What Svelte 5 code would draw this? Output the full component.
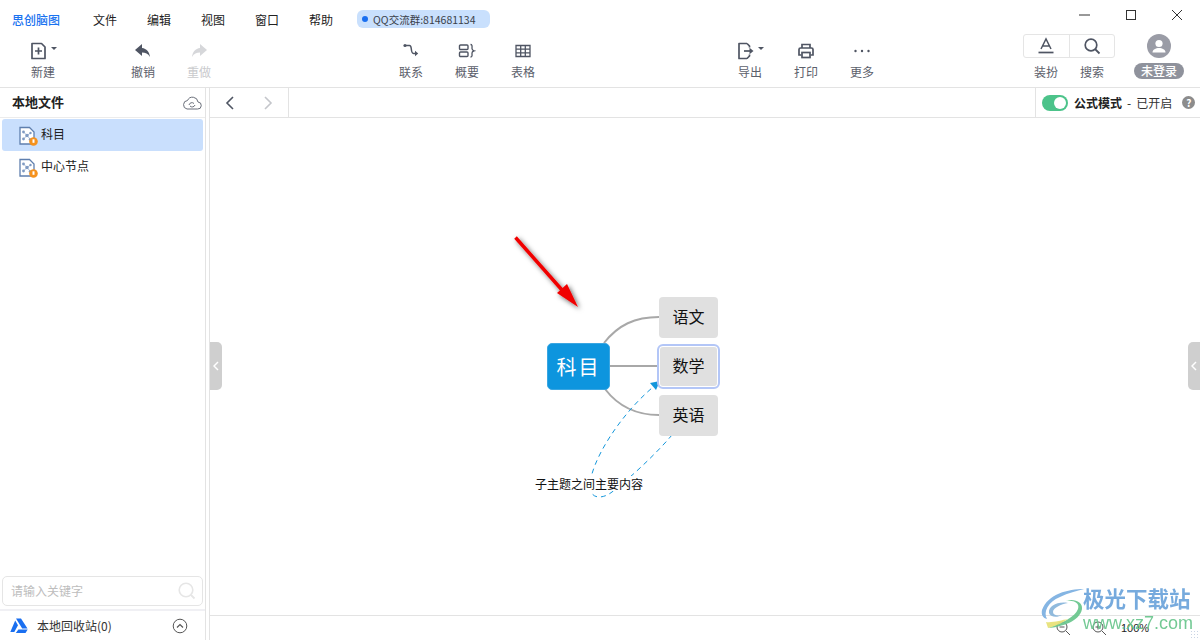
<script>
  const menus = ['文件', '编辑', '视图', '窗口', '帮助'];
  const files = [
    { name: '科目', active: true },
    { name: '中心节点', active: false }
  ];
  const branches = [
    { label: '语文', top: 179 },
    { label: '数学', top: 228, selected: true },
    { label: '英语', top: 277 }
  ];
</script>

{#snippet fileIcon()}
  <svg class="file-icon" width="20" height="20" viewBox="0 0 20 20">
    <path d="M1 1.500h9.500l4.500 4.500v12H1z" fill="#fff" stroke="#5f7fae" stroke-width="1.300" />
    <path d="M4.500 6l3.500 3.500L11.500 7M8 9.500L4.500 13M8 9.500l3.500 4" stroke="#a9bcd8" stroke-width="1" fill="none" />
    <circle cx="4.500" cy="6" r="1.400" fill="#7f9ac2" />
    <circle cx="8" cy="9.500" r="1.700" fill="#7f9ac2" />
    <circle cx="4.500" cy="13" r="1.400" fill="#7f9ac2" />
    <circle cx="11.500" cy="7" r="1.200" fill="#7f9ac2" />
    <circle cx="11" cy="13.500" r="1.300" fill="#7f9ac2" />
    <circle cx="14.500" cy="15.500" r="4.300" fill="#f5921e" />
    <path d="M14.500 13.300v3.500" stroke="#fff" stroke-width="2" />
  </svg>
{/snippet}

<div class="app">
  <header class="header">
    <div class="titlebar">
      <span class="brand">思创脑图</span>
      <nav class="menus">
        {#each menus as m}
          <span class="menu">{m}</span>
        {/each}
      </nav>
      <div class="qq"><i class="dot"></i>QQ交流群:814681134</div>
      <div class="winctl">
        <svg width="12" height="12" viewBox="0 0 12 12"><path d="M0 6h11" stroke="#333" stroke-width="1" /></svg>
        <svg width="12" height="12" viewBox="0 0 12 12"><rect x="1.500" y="1.500" width="9" height="9" fill="none" stroke="#333" /></svg>
        <svg width="12" height="12" viewBox="0 0 12 12"><path d="M1 1l10 10M11 1L1 11" stroke="#333" stroke-width="1" /></svg>
      </div>
    </div>

    <div class="toolbar">
      <div class="group first">
        <div class="tool">
          <span class="ico has-caret">
            <svg width="18" height="18" viewBox="0 0 18 18"><path d="M2 1.500h9.500l3.500 3.500v11.500H2z" fill="none" stroke="#4f5563" stroke-width="1.700" stroke-linejoin="round" /><path d="M8.500 5.500v7M5 9h7" stroke="#4f5563" stroke-width="1.700" /></svg>
            <i class="caret"></i>
          </span>
          <span>新建</span>
        </div>
      </div>
      <div class="group undo">
        <div class="tool">
          <span class="ico">
            <svg width="18" height="16" viewBox="0 0 18 16"><path d="M8 1L1 7l7 6V9.500c3.500 0 6 1 8 4.500-.5-5-3.500-8.500-8-9z" fill="#4f5563" /></svg>
          </span>
          <span>撤销</span>
        </div>
        <div class="tool off">
          <span class="ico">
            <svg width="18" height="16" viewBox="0 0 18 16"><path d="M10 1l7 6-7 6V9.500c-3.500 0-6 1-8 4.500.5-5 3.500-8.500 8-9z" fill="#d6d7da" /></svg>
          </span>
          <span>重做</span>
        </div>
      </div>
      <div class="group insert">
        <div class="tool">
          <span class="ico">
            <svg width="18" height="18" viewBox="0 0 18 18"><circle cx="3" cy="3.500" r="1.600" fill="#4f5563" /><path d="M4 3.500h3.500c1.500 0 1.500 1 1.800 3.500.3 3 .5 4.500 2.200 4.500h2.500" fill="none" stroke="#4f5563" stroke-width="1.500" /><path d="M13 8.800l3.200 2.700-3.200 2.700z" fill="#4f5563" /></svg>
          </span>
          <span>联系</span>
        </div>
        <div class="tool">
          <span class="ico">
            <svg width="18" height="18" viewBox="0 0 18 18"><rect x="1.500" y="3" width="8.500" height="4.500" rx="1" fill="none" stroke="#4f5563" stroke-width="1.400" /><rect x="1.500" y="10" width="8.500" height="4.500" rx="1" fill="none" stroke="#4f5563" stroke-width="1.400" /><path d="M12.500 2.500c2 0 1.500 2 1.500 4 0 1.500 1 2 2 2.300-1 .3-2 .8-2 2.200 0 2 .5 4-1.500 4" fill="none" stroke="#4f5563" stroke-width="1.300" /></svg>
          </span>
          <span>概要</span>
        </div>
        <div class="tool">
          <span class="ico">
            <svg width="18" height="18" viewBox="0 0 18 18"><path d="M2 3.500h14v11H2zM2 7.200h14M2 10.900h14M6.700 3.500v11M11.300 3.500v11" fill="none" stroke="#4f5563" stroke-width="1.300" /></svg>
          </span>
          <span>表格</span>
        </div>
      </div>
      <div class="group output">
        <div class="tool">
          <span class="ico has-caret">
            <svg width="18" height="18" viewBox="0 0 18 18"><path d="M10 1.500H2v15h8M10 1.500l2.500 2.500v1.500M12.500 12.500V14L10 16.500" fill="none" stroke="#4f5563" stroke-width="1.700" stroke-linejoin="round" /><path d="M7 9h6" stroke="#4f5563" stroke-width="1.700" /><path d="M12.500 5.800L16.500 9l-4 3.200z" fill="#4f5563" /></svg>
            <i class="caret"></i>
          </span>
          <span>导出</span>
        </div>
        <div class="tool">
          <span class="ico">
            <svg width="18" height="18" viewBox="0 0 18 18"><path d="M5 6V2.500h8V6M4.500 13H2V7.500A1.500 1.500 0 0 1 3.500 6h11A1.500 1.500 0 0 1 16 7.500V13h-2.500" fill="none" stroke="#4f5563" stroke-width="1.700" /><rect x="5" y="10.500" width="8" height="5" fill="none" stroke="#4f5563" stroke-width="1.700" /></svg>
          </span>
          <span>打印</span>
        </div>
        <div class="tool">
          <span class="ico">
            <svg width="18" height="18" viewBox="0 0 18 18"><circle cx="2.500" cy="9" r="1.200" fill="#4f5563" /><circle cx="9" cy="9" r="1.200" fill="#4f5563" /><circle cx="15.500" cy="9" r="1.200" fill="#4f5563" /></svg>
          </span>
          <span>更多</span>
        </div>
      </div>
      <div class="group account">
        <div class="theme">
          <div class="theme-box">
            <div class="theme-cell">
              <svg width="18" height="18" viewBox="0 0 18 18"><path d="M4 12L9 2l5 10M5.800 9h6.400" fill="none" stroke="#4f5563" stroke-width="1.500" /><path d="M1.500 15.500h15" stroke="#4f5563" stroke-width="1.700" /></svg>
            </div>
            <div class="theme-cell">
              <svg width="18" height="18" viewBox="0 0 18 18"><circle cx="8" cy="8" r="5.800" fill="none" stroke="#4f5563" stroke-width="1.700" /><path d="M12 12l4.500 4.500" stroke="#4f5563" stroke-width="1.800" /></svg>
            </div>
          </div>
          <div class="theme-labels"><span>装扮</span><span>搜索</span></div>
        </div>
        <div class="user">
          <svg width="24" height="24" viewBox="0 0 24 24"><circle cx="12" cy="12" r="12" fill="#9a9ca6" /><circle cx="12" cy="9.500" r="3.600" fill="#fff" /><path d="M5.500 18.500c0-6 13-6 13 0z" fill="#fff" /></svg>
          <span class="badge">未登录</span>
        </div>
      </div>
    </div>
  </header>

  <div class="body">
    <aside class="sidebar">
      <div class="side-title">
        <span class="side-name">本地文件</span>
        <svg width="20" height="16" viewBox="0 0 20 16"><path d="M5 14h10.500a3.500 3.500 0 0 0 .5-7A5.500 5.500 0 0 0 5.500 5.500 4.300 4.300 0 0 0 5 14z" fill="none" stroke="#6a6f7a" stroke-width="1" /><path d="M7 10a3 3 0 0 1 5-1.500M13 10a3 3 0 0 1-5 1" fill="none" stroke="#6a6f7a" stroke-width="1" /></svg>
      </div>
      <ul class="files">
        {#each files as f}
          <li class="file" class:active={f.active}>
            {@render fileIcon()}
            <span class="file-name">{f.name}</span>
          </li>
        {/each}
      </ul>
      <div class="search">
        <span class="search-hint">请输入关键字</span>
        <svg width="18" height="18" viewBox="0 0 18 18"><circle cx="8" cy="8" r="6.800" fill="none" stroke="#e6e6e6" stroke-width="1.600" /><path d="M13 13l3.500 3.500" stroke="#e6e6e6" stroke-width="1.800" /></svg>
      </div>
      <div class="recycle">
        <svg width="18" height="16" viewBox="0 0 18 16"><path d="M6 0.500h5l6.500 10h-5.300zM5.200 2.500L8 7.200 4.300 14H0.300z" fill="#1a6ff0" /><path d="M5.800 15l2.600-3.500h9.300l-2.200 3.500z" fill="#1a6ff0" /></svg>
        <span class="recycle-name">本地回收站(0)</span>
        <svg class="collapse" width="16" height="16" viewBox="0 0 16 16"><circle cx="8" cy="8" r="6.800" fill="none" stroke="#555" stroke-width="1" /><path d="M5 9.500L8 6.500l3 3" fill="none" stroke="#555" stroke-width="1.200" /></svg>
      </div>
    </aside>

    <main class="main">
      <div class="tabbar">
        <div class="nav">
          <svg width="12" height="14" viewBox="0 0 12 14"><path d="M9 1L3 7l6 6" fill="none" stroke="#4f5563" stroke-width="1.600" /></svg>
          <svg width="12" height="14" viewBox="0 0 12 14"><path d="M3 1l6 6-6 6" fill="none" stroke="#c4c6cb" stroke-width="1.600" /></svg>
        </div>
        <div class="formula">
          <span class="switch"><i></i></span>
          <b>公式模式</b><span class="state">-</span><span class="state-on">已开启</span>
          <span class="help">?</span>
        </div>
      </div>

      <div class="canvas">
        <svg class="links" width="990" height="497">
          <defs>
            <filter id="shade" x="-30%" y="-30%" width="160%" height="160%">
              <feDropShadow dx="2" dy="2" stdDeviation="2.500" flood-color="#000" flood-opacity="0.6" />
            </filter>
          </defs>
          <path d="M394 225C408 207 425 199 449 199" fill="none" stroke="#a8a8a8" stroke-width="2" />
          <path d="M400 248H449" fill="none" stroke="#a8a8a8" stroke-width="2" />
          <path d="M395 271C408 288 425 297 449 297" fill="none" stroke="#a8a8a8" stroke-width="2" />
          <path d="M462 317C445 337 420 360 402 374C393 381 380 382 380 368C380 345 410 295 448 265" fill="none" stroke="#1296db" stroke-width="1" stroke-dasharray="5 4" />
          <path d="M450 263L440 265 446 272z" fill="#1296db" />
          <g filter="url(#shade)">
            <path d="M305.500 119.500L352 172" stroke="#f00000" stroke-width="3.500" />
            <path d="M368 189L347 175 357 166z" fill="#f00000" />
          </g>
        </svg>
        <div class="root">科目</div>
        {#each branches as b}
          <div class="branch" class:selected={b.selected} style="top: {b.top}px">{b.label}</div>
        {/each}
        <div class="note">子主题之间主要内容</div>
        <div class="handle left"><svg width="6" height="10" viewBox="0 0 6 10"><path d="M5 1L1 5l4 4" fill="none" stroke="#fff" stroke-width="1.500" /></svg></div>
        <div class="handle right"><svg width="6" height="10" viewBox="0 0 6 10"><path d="M5 1L1 5l4 4" fill="none" stroke="#fff" stroke-width="1.500" /></svg></div>
      </div>

      <div class="statusbar">
        <svg width="15" height="15" viewBox="0 0 15 15"><circle cx="6" cy="6" r="5" fill="none" stroke="#555" /><path d="M3.500 6h5M10 10l4 4" stroke="#555" /></svg>
        <svg width="15" height="15" viewBox="0 0 15 15"><circle cx="6" cy="6" r="5" fill="none" stroke="#555" /><path d="M3.500 6h5M6 3.500v5M10 10l4 4" stroke="#555" /></svg>
        <span class="zoom">100%</span>
      </div>
    </main>
  </div>

  <div class="watermark">
    <svg width="46" height="42" viewBox="0 0 46 42">
      <path d="M44 1C28 1 8 6 2 22c-1 5 1 8 5 9C3 24 8 14 20 9 28 5 37 3 44 1z" fill="#7fb2e2" />
      <path d="M28 15C18 13 8 18 9 25c1 4 8 5 13 2-5 1-9 0-9-3 0-4 8-8 15-9z" fill="#8bb7dc" />
      <path d="M26 13c8-1 14 2 12 8-3 8-16 14-30 19 14-1 32-7 34-19 1-7-8-11-16-8z" fill="#6cc78f" />
      <path d="M8 40c8-2 14-5 20-9-6 1-16 4-22 3z" fill="#e8e27a" />
    </svg>
    <div class="wm-text">
      <span class="wm-cn">极光下载站</span>
      <span class="wm-en">www.xz7.com</span>
    </div>
  </div>
  <div class="grip"></div>
</div>

<style>
  :global(body) {
    margin: 0;
    background: #fff;
  }

  .app {
    position: relative;
    width: 1200px;
    height: 640px;
    overflow: hidden;
    display: flex;
    flex-direction: column;
    font-family: "Noto Sans CJK SC", "Liberation Sans", sans-serif;
    font-size: 12px;
    color: #222;
  }

  .header {
    height: 87px;
    flex-shrink: 0;
    border-bottom: 1px solid #e3e3e3;
  }

  .titlebar {
    height: 30px;
    padding: 4px 0 0 12px;
    display: flex;
    align-items: center;
  }

  .brand {
    width: 81px;
    color: #1a73f0;
    font-weight: 500;
  }

  .menus {
    display: flex;
    gap: 30px;
  }

  .qq {
    margin-left: 24px;
    width: 133px;
    height: 18px;
    box-sizing: border-box;
    padding-left: 5px;
    display: flex;
    align-items: center;
    gap: 5px;
    background: #c9e0fd;
    border-radius: 6px;
    font-size: 10.500px;
    color: #3a3f4a;
  }

  .dot {
    width: 6px;
    height: 6px;
    border-radius: 50%;
    background: #1a6ff0;
  }

  .winctl {
    margin-left: auto;
    margin-top: -8px;
    padding-right: 17px;
    display: flex;
    gap: 34px;
  }

  .toolbar {
    height: 53px;
    display: flex;
    color: #5c606b;
  }

  .group {
    display: flex;
  }

  .first {
    margin-left: 15px;
  }

  .undo {
    margin-left: 44px;
  }

  .insert {
    margin-left: 156px;
  }

  .output {
    margin-left: 171px;
  }

  .account {
    margin-left: auto;
    padding-right: 16px;
    gap: 19px;
  }

  .tool {
    width: 56px;
    padding-top: 8px;
    display: flex;
    flex-direction: column;
    align-items: center;
    gap: 3px;
    line-height: 17px;
  }

  .tool.off {
    color: #c9cacd;
  }

  .ico {
    position: relative;
    height: 18px;
    display: flex;
    align-items: center;
  }

  .ico.has-caret {
    margin-right: 8px;
  }

  .caret {
    position: absolute;
    left: 21px;
    top: 5px;
    border: 3px solid transparent;
    border-top: 3px solid #4f5563;
    border-bottom: 0;
  }

  .theme {
    width: 92px;
  }

  .theme-box {
    height: 24px;
    box-sizing: border-box;
    display: flex;
    border: 1px solid #e5e5e5;
    border-radius: 3px;
  }

  .theme-cell {
    flex: 1;
    display: flex;
    align-items: center;
    justify-content: center;
  }

  .theme-cell + .theme-cell {
    border-left: 1px solid #e5e5e5;
  }

  .theme-labels {
    margin-top: 5px;
    display: flex;
    line-height: 17px;
  }

  .theme-labels span {
    flex: 1;
    text-align: center;
  }

  .user {
    width: 50px;
    display: flex;
    flex-direction: column;
    align-items: center;
    gap: 5px;
  }

  .badge {
    width: 50px;
    height: 16px;
    line-height: 16px;
    border-radius: 8px;
    background: #8f929c;
    color: #fff;
    text-align: center;
    font-size: 12px;
    font-weight: 500;
  }

  .body {
    flex: 1;
    min-height: 0;
    display: flex;
  }

  .sidebar {
    width: 205px;
    flex-shrink: 0;
    box-sizing: content-box;
    border-right: 1px solid #e3e3e3;
    display: flex;
    flex-direction: column;
  }

  .side-title {
    height: 29px;
    flex-shrink: 0;
    padding: 0 3px 0 12px;
    display: flex;
    align-items: center;
    justify-content: space-between;
    border-bottom: 1px solid #ececec;
    color: #222;
  }

  .side-name {
    margin-top: -2px;
    font-size: 13px;
    font-weight: 700;
  }

  .files {
    flex: 1;
    margin: 1px 0 0;
    padding: 0 2px;
    list-style: none;
  }

  .file {
    height: 32px;
    padding-left: 17px;
    display: flex;
    align-items: center;
    gap: 2px;
    border-radius: 3px;
  }

  .file.active {
    background: #c9dffd;
  }

  .file-icon {
    flex-shrink: 0;
    margin-top: 1px;
  }

  .file-name {
    margin-top: -4px;
  }

  .search {
    height: 30px;
    margin: 0 2px;
    box-sizing: border-box;
    padding: 0 6px 0 8px;
    display: flex;
    align-items: center;
    justify-content: space-between;
    border: 1px solid #e5e5e5;
    border-radius: 5px;
    color: #bdbdbd;
  }

  .search-hint {
    margin-top: -1px;
  }

  .recycle {
    height: 29px;
    margin-top: 3px;
    padding: 0 17px 0 10px;
    display: flex;
    align-items: center;
    border-top: 2px solid #f0f0f4;
    color: #333;
  }

  .recycle-name {
    margin-left: 9px;
    flex: 1;
  }

  .main {
    flex: 1;
    min-width: 0;
    margin-left: 3px;
    border-left: 1px solid #e3e3e3;
    display: flex;
    flex-direction: column;
  }

  .tabbar {
    height: 29px;
    flex-shrink: 0;
    display: flex;
    justify-content: space-between;
    border-bottom: 1px solid #e3e3e3;
  }

  .nav {
    width: 79px;
    padding-left: 14px;
    box-sizing: border-box;
    display: flex;
    align-items: center;
    gap: 26px;
    border-right: 1px solid #e3e3e3;
  }

  .formula {
    width: 165px;
    box-sizing: border-box;
    padding-left: 6px;
    display: flex;
    align-items: center;
    border-left: 1px solid #e3e3e3;
    color: #222;
  }

  .formula b {
    margin-left: 6px;
    margin-top: -1px;
  }

  .state {
    margin-left: 5px;
    margin-top: -1px;
  }

  .state-on {
    margin-left: 5px;
    margin-top: -1px;
    color: #333;
  }

  .switch {
    width: 26px;
    height: 16px;
    box-sizing: border-box;
    padding: 2px;
    display: flex;
    justify-content: flex-end;
    border-radius: 8px;
    background: #4cc38a;
  }

  .switch i {
    width: 12px;
    height: 12px;
    border-radius: 50%;
    background: #fff;
  }

  .help {
    margin-left: 10px;
    width: 13px;
    height: 13px;
    border-radius: 50%;
    background: #8c8c8c;
    color: #fff;
    font-size: 10px;
    font-weight: 700;
    line-height: 13px;
    text-align: center;
  }

  .canvas {
    position: relative;
    flex: 1;
    min-height: 0;
  }

  .links {
    position: absolute;
    left: 0;
    top: 0;
  }

  .root {
    position: absolute;
    left: 337px;
    top: 225px;
    width: 63px;
    height: 47px;
    box-sizing: border-box;
    border: 1px solid #3aa6e2;
    line-height: 45px;
    text-align: center;
    border-radius: 5px;
    background: #0d95de;
    color: #fff;
    font-size: 20px;
    letter-spacing: 2px;
  }

  .branch {
    position: absolute;
    left: 449px;
    width: 59px;
    height: 41px;
    line-height: 39px;
    text-align: center;
    border-radius: 4px;
    background: #e0e0e0;
    color: #111;
    font-size: 16px;
  }

  .branch.selected {
    outline: 2px solid #b3c6f7;
    outline-offset: 0;
    box-shadow: 0 0 0 1px #fff inset;
  }

  .note {
    position: absolute;
    left: 325px;
    top: 358px;
    height: 15px;
    line-height: 15px;
    background: #fff;
    color: #111;
  }

  .handle {
    position: absolute;
    top: 224px;
    width: 12px;
    height: 48px;
    display: flex;
    align-items: center;
    justify-content: center;
    background: #cfcfcf;
  }

  .handle.left {
    left: 0;
    border-radius: 0 5px 5px 0;
  }

  .handle.right {
    right: 0;
    border-radius: 5px 0 0 5px;
  }

  .statusbar {
    height: 24px;
    flex-shrink: 0;
    padding-left: 846px;
    display: flex;
    align-items: center;
    gap: 21px;
    border-top: 1px solid #e3e3e3;
    font-size: 11px;
  }

  .zoom {
    margin-left: -7px;
    font-family: "Liberation Sans", sans-serif;
  }

  .watermark {
    position: absolute;
    left: 1040px;
    top: 588px;
    display: flex;
    opacity: 0.95;
    pointer-events: none;
  }

  .wm-text {
    margin-left: -3px;
    display: flex;
    flex-direction: column;
    line-height: 1;
  }

  .wm-cn {
    margin-top: -1px;
    font-size: 21.500px;
    font-weight: 700;
    color: #6fa6dc;
    white-space: nowrap;
  }

  .wm-en {
    margin-top: 5px;
    font-family: "Liberation Sans", sans-serif;
    font-size: 18px;
    line-height: 18px;
    color: #6cc78f;
  }

  .grip {
    position: absolute;
    right: 0;
    bottom: 0;
    width: 10px;
    height: 10px;
    background-image: radial-gradient(circle, #c9d4e4 1px, transparent 1px);
    background-size: 3px 3px;
  }
</style>
